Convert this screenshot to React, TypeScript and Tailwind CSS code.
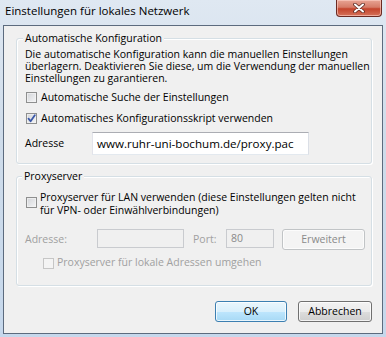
import React from "react";

function CheckBox({ checked = false, disabled = false }: { checked?: boolean; disabled?: boolean }) {
  return (
    <div
      className={
        "relative w-[11px] h-[11px] shrink-0 border " +
        (disabled ? "border-[#c6c6c6] bg-[#f4f4f4]" : "border-[#8e8f8f] bg-[linear-gradient(135deg,#d2d4d8,#f4f5f6)]")
      }
    >
      {!disabled && <div className="absolute inset-0 border border-[#f4f4f4] opacity-70" />}
      {checked && (
        <svg className="absolute left-[0px] top-[0px]" width="9" height="9" viewBox="0 0 9 9">
          <path d="M1.5 4.6 L3.6 7.2 L7.8 1.2" fill="none" stroke="#3a58a8" strokeWidth="1.8" strokeLinecap="round" strokeLinejoin="round" />
        </svg>
      )}
    </div>
  );
}

function Button({ children, kind = "normal", className = "" }: { children: React.ReactNode; kind?: "normal" | "default" | "disabled"; className?: string }) {
  const styles =
    kind === "default"
      ? "border-[#3c7fb1] bg-[linear-gradient(to_bottom,#eaf6fd_0%,#d9f0fc_50%,#bee6fd_51%,#a7d9f5_100%)] text-black"
      : kind === "disabled"
      ? "border-[#c1c4c6] bg-[#f4f4f4] text-[#8a8a8a]"
      : "border-[#707070] bg-[linear-gradient(to_bottom,#f2f2f2_0%,#ebebeb_50%,#dddddd_51%,#cfcfcf_100%)] text-black";
  return (
    <div className={"flex items-center justify-center rounded-[3px] border shadow-[inset_0_0_0_1px_rgba(255,255,255,0.75)] " + styles + " " + className}>
      {children}
    </div>
  );
}

export default function App() {
  return (
    <div className="w-[386px] h-[337px] overflow-hidden bg-[linear-gradient(to_bottom,#dfe8f2_0%,#cfdcea_40%,#c6d8ec_100%)] font-['Open_Sans',sans-serif] text-[10.5px] text-black">
      {/* Title bar */}
      <div className="flex h-[25px] items-start">
        <div className="ml-[5px] mt-[4px] whitespace-nowrap text-[11.5px] leading-[14px] text-black">Einstellungen für lokales Netzwerk</div>
        <div className="ml-auto mr-[4px] flex h-[17px] w-[46px] items-center justify-center rounded-b-[4px] border border-t-0 border-[#6b2a22] bg-[linear-gradient(to_bottom,#e8a494_0%,#d67c68_45%,#c4442c_55%,#d5725a_100%)] shadow-[inset_0_0_0_1px_rgba(255,210,200,0.6)]">
          <svg width="12" height="10" viewBox="0 0 12 10">
            <path d="M2 1.5 L10 8.5 M10 1.5 L2 8.5" stroke="#5b2a22" strokeWidth="3.6" strokeLinecap="round" />
            <path d="M2 1.5 L10 8.5 M10 1.5 L2 8.5" stroke="#ffffff" strokeWidth="2" strokeLinecap="round" />
          </svg>
        </div>
      </div>

      {/* Client area */}
      <div className="ml-[3px] h-[309px] w-[380px] border border-[#5c6b7e] bg-[#f0f0f0]">
        {/* Group 1 */}
        <div className="relative ml-[12px] mt-[12px] h-[126px] w-[356px] rounded-[3px] border border-[#d5dfe5] shadow-[inset_1px_1px_0_#fff,1px_1px_0_#fff]">
          <div className="absolute left-[6px] top-[-7px] whitespace-nowrap bg-[#f0f0f0] px-[2px] leading-[12px]">Automatische Konfiguration</div>
          <div className="whitespace-nowrap pl-[8px] pt-[9px] leading-[12px]">
            <div>Die automatische Konfiguration kann die manuellen Einstellungen</div>
            <div>überlagern. Deaktivieren Sie diese, um die Verwendung der manuellen</div>
            <div>Einstellungen zu garantieren.</div>
          </div>
          <div className="mt-[3px] flex h-[21px] items-center gap-[4px] whitespace-nowrap pl-[9px]">
            <CheckBox />
            <span>Automatische Suche der Einstellungen</span>
          </div>
          <div className="flex h-[21px] items-center gap-[4px] whitespace-nowrap pl-[9px]">
            <CheckBox checked />
            <span>Automatisches Konfigurationsskript verwenden</span>
          </div>
          <div className="mt-[3px] flex h-[23px] items-center pl-[8px]">
            <span className="w-[67px]">Adresse</span>
            <div className="flex h-[23px] w-[217px] items-center whitespace-nowrap border border-[#abadb3] border-b-[#e3e9ef] border-l-[#e2e3ea] border-r-[#dbdfe6] bg-white pl-[4px] text-[11.6px]">
              www.ruhr-uni-bochum.de/proxy.pac
            </div>
          </div>
        </div>

        {/* Group 2 */}
        <div className="relative ml-[12px] mt-[12px] h-[110px] w-[356px] rounded-[3px] border border-[#d5dfe5] shadow-[inset_1px_1px_0_#fff,1px_1px_0_#fff]">
          <div className="absolute left-[5px] top-[-7px] whitespace-nowrap bg-[#f0f0f0] px-[2px] leading-[12px]">Proxyserver</div>
          <div className="mt-[14px] flex items-start gap-[3px] whitespace-nowrap pl-[9px] leading-[12.5px]">
            <div className="mt-[6px]">
              <CheckBox />
            </div>
            <div>
              <div>Proxyserver für LAN verwenden (diese Einstellungen gelten nicht</div>
              <div>für VPN- oder Einwählverbindungen)</div>
            </div>
          </div>
          <div className="mt-[13px] flex h-[21px] items-start whitespace-nowrap pl-[8px] text-[#a0a0a0]">
            <span className="mt-[3px] w-[72px]">Adresse:</span>
            <div className="h-[19px] w-[87px] border border-[#c9cbcf] bg-[#f0f0f0]" />
            <span className="ml-[9px] mt-[3px] w-[33px]">Port:</span>
            <div className="flex h-[19px] w-[48px] items-center border border-[#c9cbcf] bg-[#f0f0f0] pl-[4px] text-[#8a8a8a]">80</div>
            <Button kind="disabled" className="ml-[8px] h-[21px] w-[83px]">Erweitert</Button>
          </div>
          <div className="mt-[7px] flex h-[12px] items-center gap-[3px] whitespace-nowrap pl-[26px] text-[#a0a0a0]">
            <CheckBox disabled />
            <span>Proxyserver für lokale Adressen umgehen</span>
          </div>
        </div>

        {/* Buttons */}
        <div className="mt-[15px] flex justify-end gap-[11px] pr-[10px]">
          <Button kind="default" className="h-[21px] w-[72px]">OK</Button>
          <Button className="h-[21px] w-[74px]">Abbrechen</Button>
        </div>
      </div>
    </div>
  );
}
